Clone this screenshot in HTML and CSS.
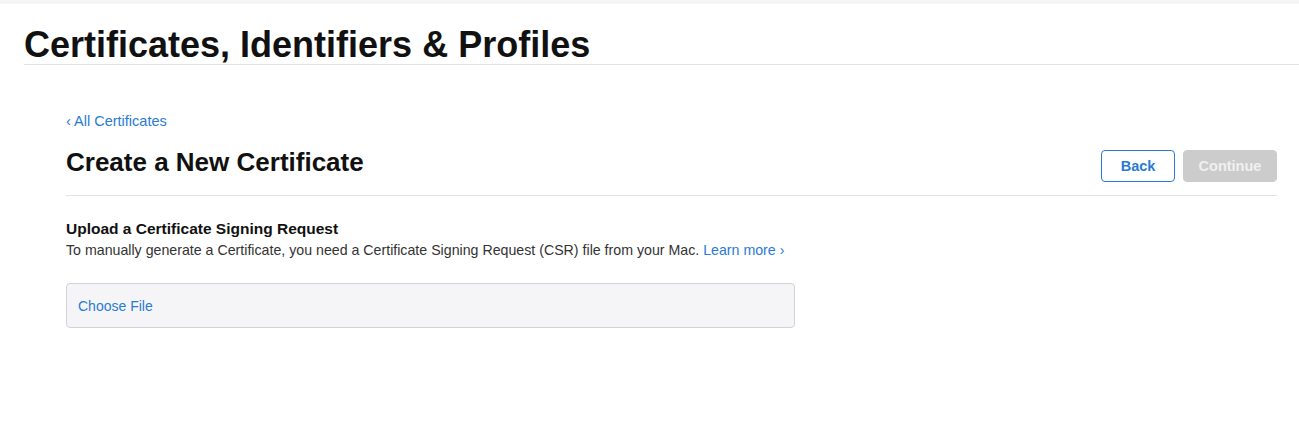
FILE: index.html
```html
<!DOCTYPE html>
<html lang="en">
<head>
<meta charset="utf-8">
<title>Certificates, Identifiers &amp; Profiles</title>
<link rel="stylesheet" href="styles.css">
</head>
<body>
<div class="topstrip"></div>
<header class="page-header">
  <h1 class="page-title">Certificates, Identifiers &amp; Profiles</h1>
</header>
<main class="content">
  <a class="back-link" href="#">&lsaquo; All Certificates</a>
  <div class="title-row">
    <h2 class="section-title">Create a New Certificate</h2>
    <div class="actions">
      <button class="btn btn-back" type="button">Back</button>
      <button class="btn btn-continue" type="button" disabled>Continue</button>
    </div>
  </div>
  <section class="upload">
    <h3 class="upload-title">Upload a Certificate Signing Request</h3>
    <p class="upload-desc">To manually generate a Certificate, you need a Certificate Signing Request (CSR) file from your Mac. <a class="learn" href="#">Learn more &rsaquo;</a></p>
    <div class="file-box"><span class="choose">Choose File</span></div>
  </section>
</main>
</body>
</html>
```
FILE: styles.css
```css
* { box-sizing: border-box; }
html, body { margin: 0; padding: 0; background: #fff; }
body {
  font-family: "Liberation Sans", Arial, sans-serif;
  color: #1d1d1f;
}
.topstrip { height: 4px; background: #f5f5f7; }
.page-header {
  margin-left: 24px;
  border-bottom: 1px solid #e3e3e5;
  padding-top: 22px;
  height: 61px;
}
.page-title {
  margin: 0;
  font-size: 36px;
  line-height: 38px;
  font-weight: 700;
  letter-spacing: 0;
  color: #111;
}
.content {
  padding: 48px 22px 0 66px;
}
.back-link {
  display: block;
  font-size: 14.5px;
  line-height: 16px;
  color: #2a7bd3;
  text-decoration: none;
}
.title-row {
  display: flex;
  align-items: center;
  justify-content: space-between;
  border-bottom: 1px solid #e3e3e5;
  height: 67px;
}
.section-title {
  margin: 0;
  font-size: 26px;
  font-weight: 700;
  color: #111;
}
.actions { display: flex; gap: 8px; padding-top: 7px; }
.btn {
  height: 32px;
  border-radius: 4px;
  font-family: inherit;
  font-size: 14.5px;
  font-weight: 600;
  padding: 0;
}
.btn-back {
  width: 74px;
  background: #fff;
  border: 1px solid #2a7bd3;
  color: #2a7bd3;
}
.btn-continue {
  width: 94px;
  background: #cccccc;
  border: 1px solid #cccccc;
  color: #f0f0f0;
}
.upload { padding-top: 24px; }
.upload-title {
  margin: 0;
  font-size: 15.5px;
  line-height: 18px;
  font-weight: 700;
  color: #111;
}
.upload-desc {
  margin: 3px 0 0;
  font-size: 14.2px;
  line-height: 18px;
  color: #333;
}
.learn { color: #2a7bd3; text-decoration: none; }
.file-box {
  margin-top: 24px;
  width: 729px;
  height: 45px;
  border: 1px solid #d2d2d7;
  border-radius: 4px;
  background: #f5f5f7;
  display: flex;
  align-items: center;
  padding-left: 11px;
}
.choose { font-size: 14px; color: #2a7bd3; }
```
